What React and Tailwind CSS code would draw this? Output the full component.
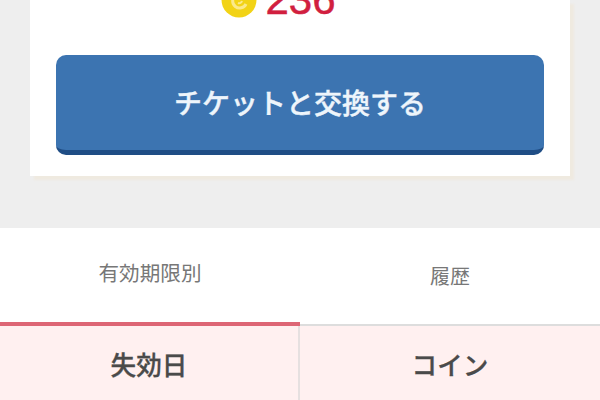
import React from 'react';

const jp = { fontFamily: '"Noto Sans CJK JP", sans-serif' };

const App = () => {
  return (
    <div className="w-[600px] h-[400px] overflow-hidden bg-[#eeeeee] flex flex-col" style={jp}>
      {/* Exchange card */}
      <div className="h-[228px] shrink-0 px-[30px]">
        <div className="h-[176px] bg-white shadow-[4px_4px_2px_#efeae0] px-[26px] flex flex-col">
          <div className="h-[55px] flex justify-center items-start pr-[43px]">
            <div className="h-[36px] -mt-[18px] flex items-center gap-[8px]">
              <svg width="36" height="36" viewBox="0 0 36 36" className="shrink-0">
                <circle cx="18" cy="18" r="17.5" fill="#f2d316" />
                <path d="M25 16a7 7 0 1 0 0 6" fill="none" stroke="#fbe98a" strokeWidth="3" />
                <path d="M21 19a3 3 0 0 1-4 2" fill="none" stroke="#fbe98a" strokeWidth="2" />
              </svg>
              <span className="text-[42px] leading-none text-[#d11f3f] [-webkit-text-stroke:0.5px_#d11f3f]" style={{ fontFamily: '"Liberation Sans", sans-serif' }}>236</span>
            </div>
          </div>
          <button className="h-[100px] w-full rounded-[10px] bg-[#3c74b1] border-b-[5px] border-[#1f4d85] text-[#eef5fb] text-[28px] font-medium [-webkit-text-stroke:0.4px_#eef5fb] flex items-center justify-center pb-[2px]">
            チケットと交換する
          </button>
        </div>
      </div>

      {/* Tabs */}
      <div className="h-[98px] shrink-0 flex bg-white text-[#777777]">
        <div className="w-[300px] flex items-center justify-center border-b-[4px] border-[#dd6675] pb-[5px] text-[20.6px]">有効期限別</div>
        <div className="w-[300px] flex items-center justify-center border-b-[2px] border-[#dddddd] text-[20px]">履歴</div>
      </div>

      {/* Table head */}
      <div className="flex-1 flex bg-[#fff0f0] text-[#4a4a4a] text-[25.6px] font-medium [-webkit-text-stroke:0.3px_#4a4a4a]">
        <div className="w-[300px] flex items-center justify-center border-r-[2px] border-[#e6e0e0] pt-[2px]">失効日</div>
        <div className="w-[300px] flex items-center justify-center pt-[2px]">コイン</div>
      </div>
    </div>
  );
};

export default App;
